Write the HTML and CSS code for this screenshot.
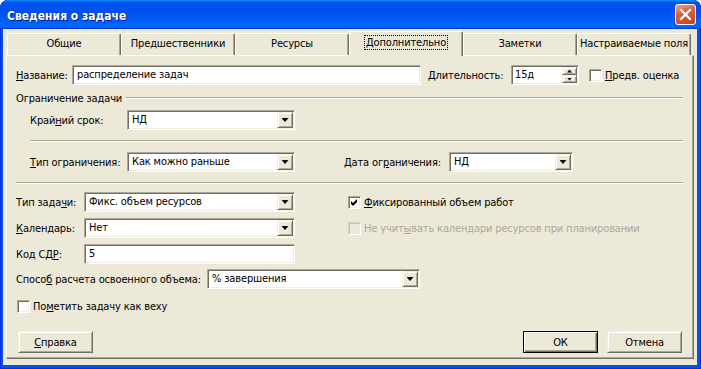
FILE: index.html
```html
<!DOCTYPE html>
<html lang="ru">
<head>
  <meta charset="UTF-8" />
  <title>Сведения о задаче</title>
  <link rel="stylesheet" href="styles.css">
</head>
<body>
  <div class="window">
    <div class="titlebar">
      <span class="title">Сведения о задаче</span>
      <span class="close">
        <svg width="19" height="19" viewBox="0 0 19 19"><path d="M5 5 L14 14 M14 5 L5 14" stroke="#fff" stroke-width="2.2" stroke-linecap="square"/></svg>
      </span>
    </div>

    <div class="client">
      <!-- вкладки -->
      <div class="tabs">
        <div class="tab">Общие</div>
        <div class="tab">Предшественники</div>
        <div class="tab">Ресурсы</div>
        <div class="tab active"><span class="focus">Дополнительно</span></div>
        <div class="tab">Заметки</div>
        <div class="tab">Настраиваемые поля</div>
      </div>

      <div class="panel">
        <!-- название / длительность -->
        <div class="row">
          <span class="lbl w-name"><u>Н</u>азвание:</span>
          <div class="edit sunken name-edit">распределение задач</div>
          <span class="lbl w-dur"><u>Д</u>лительность:</span>
          <div class="edit sunken spin">
            <span class="spin-val">15д</span>
            <div class="spin-btns">
              <span class="btn3d spin-btn"><i class="tri up sm"></i></span>
              <span class="btn3d spin-btn"><i class="tri down sm"></i></span>
            </div>
          </div>
          <span class="check sunken est-check"></span>
          <span class="check-lbl"><u>П</u>редв. оценка</span>
        </div>

        <!-- ограничение задачи -->
        <div class="group">Ограничение задачи</div>

        <div class="row indent">
          <span class="lbl w-deadline">Край<u>н</u>ий срок:</span>
          <div class="combo sunken w-deadline-combo">
            <span class="val">НД</span>
            <span class="btn3d drop"><i class="tri down"></i></span>
          </div>
        </div>

        <div class="sep indent-sep"></div>

        <div class="row indent">
          <span class="lbl w-deadline"><u>Т</u>ип ограничения:</span>
          <div class="combo sunken w-deadline-combo">
            <span class="val">Как можно раньше</span>
            <span class="btn3d drop"><i class="tri down"></i></span>
          </div>
          <span class="lbl w-cdate">Дата ог<u>р</u>аничения:</span>
          <div class="combo sunken w-cdate-combo">
            <span class="val">НД</span>
            <span class="btn3d drop"><i class="tri down"></i></span>
          </div>
        </div>

        <div class="sep"></div>

        <!-- тип задачи, календарь, код -->
        <div class="cols">
          <div class="col">
            <div class="row">
              <span class="lbl w-type">Тип зада<u>ч</u>и:</span>
              <div class="combo sunken w-type-combo">
                <span class="val">Фикс. объем ресурсов</span>
                <span class="btn3d drop"><i class="tri down"></i></span>
              </div>
            </div>
            <div class="row">
              <span class="lbl w-type"><u>К</u>алендарь:</span>
              <div class="combo sunken w-type-combo">
                <span class="val">Нет</span>
                <span class="btn3d drop"><i class="tri down"></i></span>
              </div>
            </div>
            <div class="row">
              <span class="lbl w-type">Код СД<u>Р</u>:</span>
              <div class="edit sunken w-type-combo">5</div>
            </div>
          </div>
          <div class="col right-col">
            <div class="row">
              <span class="check sunken on">
                <svg width="9" height="9" viewBox="0 0 9 9"><path d="M1 3 L3 5 L7 1 L7 4 L3 8 L1 6 Z" fill="#000"/></svg>
              </span>
              <span class="check-lbl"><u>Ф</u>иксированный объем работ</span>
            </div>
            <div class="row">
              <span class="check sunken off"></span>
              <span class="check-lbl disabled">Не учит<u>ы</u>вать календари ресурсов при планировании</span>
            </div>
          </div>
        </div>

        <div class="row method">
          <span class="lbl w-method">Спосо<u>б</u> расчета освоенного объема:</span>
          <div class="combo sunken w-method-combo">
            <span class="val">% завершения</span>
            <span class="btn3d drop"><i class="tri down"></i></span>
          </div>
        </div>

        <div class="row milestone">
          <span class="check sunken ms-check"></span>
          <span class="check-lbl">По<u>м</u>етить задачу как веху</span>
        </div>

        <!-- кнопки -->
        <div class="buttons">
          <span class="btn3d button help"><u>С</u>правка</span>
          <div class="btn-group">
            <span class="btn3d button default">ОК</span>
            <span class="btn3d button">Отмена</span>
          </div>
        </div>
      </div>
    </div>
  </div>
</body>
</html>
```

FILE: styles.css
```css
body {
  margin: 0;
  font-family: "DejaVu Sans Condensed", "DejaVu Sans", sans-serif;
  font-size: 11px;
  letter-spacing: -0.15px;
  color: #000;
  background: #fff;
}
u { text-decoration: underline; text-underline-offset: 1px; }

.window {
  width: 701px;
  height: 369px;
  display: flex;
  flex-direction: column;
  background: #0054e3;
  border-radius: 8px 8px 0 0;
  box-shadow: inset 0 0 0 1px #0831d9;
  overflow: hidden;
}
.titlebar {
  height: 29px;
  flex-shrink: 0;
  display: flex;
  align-items: center;
  justify-content: space-between;
  padding: 2px 5px 0 7px;
  box-sizing: border-box;
  background: linear-gradient(180deg, #0997ff, #0053ee 8%, #0050ee 40%, #0066ff 88%, #0066ff 93%, #005bff 95%, #003dd7 96%, #003dd7);
  border-radius: 8px 8px 0 0;
}
.title {
  color: #fff;
  font-family: "DejaVu Sans Condensed", "DejaVu Sans", sans-serif;
  font-weight: bold;
  font-size: 12px;
  letter-spacing: 0;
  text-shadow: 1px 1px #0a1883;
}
.close {
  width: 21px;
  height: 21px;
  box-sizing: border-box;
  display: flex;
  align-items: center;
  justify-content: center;
  border: 1px solid #fff;
  border-radius: 3px;
  background: linear-gradient(160deg, #f0a084, #e0603c 40%, #c8401c);
  margin-top: -2px;
}

.client {
  flex: 1;
  margin: 0 4px 4px 3px;
  padding: 2px 3px 0 3px;
  background: #ece9d8;
  display: flex;
  flex-direction: column;
}

/* вкладки */
.tabs {
  height: 24px;
  display: flex;
  align-items: flex-end;
  padding-left: 1px;
}
.tab {
  width: 114px;
  height: 22px;
  box-sizing: border-box;
  text-align: center;
  line-height: 20px;
  white-space: nowrap;
  border-top: 1px solid #fff;
  border-left: 1px solid #fff;
  border-right: 1px solid #716f64;
  box-shadow: inset -1px 0 0 #aca899;
  border-radius: 2px 2px 0 0;
}
.tab.active {
  height: 25px;
  margin-bottom: -1px;
  position: relative;
  z-index: 1;
  background: #ece9d8;
  line-height: 22px;
}
.focus {
  border: 1px dotted #000;
  padding: 0 1px;
}

.panel {
  height: 304px;
  box-sizing: border-box;
  border: 1px solid #fff;
  border-right-color: #716f64;
  border-bottom-color: #716f64;
  box-shadow: inset -1px -1px 0 #aca899;
  padding: 9px 10px 0 9px;
}

.row {
  height: 20px;
  display: flex;
  align-items: center;
  white-space: nowrap;
}
.lbl { flex-shrink: 0; }
.w-name { width: 56px; }
.name-edit { width: 349px; }
.w-dur { width: 83px; margin-left: 7px; }
.spin { width: 68px; }
.est-check { margin-left: 10px; }

.indent { padding-left: 14px; }
.w-deadline { width: 97px; }
.w-deadline-combo { width: 168px; }
.w-cdate { width: 105px; margin-left: 49px; }
.w-cdate-combo { width: 124px; }
.w-type { width: 68px; }
.w-type-combo { width: 211px; }
.w-method { width: 191px; }
.w-method-combo { width: 213px; }

.group {
  height: 14px;
  margin-top: 6px;
  display: flex;
  align-items: center;
  white-space: nowrap;
}
.group::after {
  content: "";
  flex: 1;
  margin-left: 4px;
  border-top: 1px solid #aca899;
  border-bottom: 1px solid #fff;
}
.group + .row { margin-top: 5px; }

.sep {
  margin-top: 10px;
  border-top: 1px solid #aca899;
  border-bottom: 1px solid #fff;
}
.indent-sep { margin-left: 14px; }
.sep + .row { margin-top: 10px; }

.cols {
  display: flex;
  margin-top: 8px;
}
.col {
  display: flex;
  flex-direction: column;
  gap: 6px;
}
.right-col { margin-left: 53px; }
.method { margin-top: 5px; }
.milestone { margin-top: 11px; height: 13px; padding-left: 1px; }

/* поля ввода */
.sunken {
  box-sizing: border-box;
  border: 1px solid;
  border-color: #aca899 #fff #fff #aca899;
  box-shadow: inset 1px 1px 0 #716f64, inset -1px -1px 0 #f1efe2;
}
.edit, .combo {
  height: 20px;
  padding: 1px;
  background: #fff;
  display: flex;
  align-items: center;
  flex-shrink: 0;
}
.edit { padding-left: 4px; line-height: 16px; }
.combo .val { flex: 1; padding-left: 3px; line-height: 16px; }
.btn3d {
  box-sizing: border-box;
  background: #ece9d8;
  border: 1px solid;
  border-color: #f1efe2 #716f64 #716f64 #f1efe2;
  box-shadow: inset 1px 1px 0 #fff, inset -1px -1px 0 #aca899;
  display: flex;
  align-items: center;
  justify-content: center;
}
.drop { width: 16px; height: 16px; }
.tri {
  display: block;
  width: 7px;
  height: 4px;
  background: #000;
}
.tri.down { clip-path: polygon(0 0, 100% 0, 50% 100%); }
.tri.up { clip-path: polygon(50% 0, 100% 100%, 0 100%); }
.tri.sm { width: 5px; height: 3px; }

.spin { padding: 1px 1px 1px 3px; }
.spin-val { flex: 1; }
.spin-btns {
  width: 15px;
  height: 16px;
  display: flex;
  flex-direction: column;
}
.spin-btn { height: 8px; }

/* флажки */
.check {
  width: 13px;
  height: 13px;
  flex-shrink: 0;
  background: #fff;
  display: flex;
  align-items: center;
  justify-content: center;
}
.check.off {
  background: #ece9d8;
  border-color: #d4d0c8 #fff #fff #d4d0c8;
  box-shadow: inset 1px 1px 0 #c8c4b4;
}
.check-lbl { margin-left: 3px; }
.disabled { color: #aca899; }

/* кнопки */
.buttons {
  margin-top: 18px;
  display: flex;
  justify-content: space-between;
  padding-left: 2px;
  padding-right: 1px;
}
.btn-group { display: flex; gap: 9px; }
.button {
  width: 75px;
  height: 22px;
}
.button.default {
  border: 1px solid #000;
  box-shadow: inset 1px 1px 0 #fff, inset -1px -1px 0 #716f64, inset -2px -2px 0 #aca899;
}
```
